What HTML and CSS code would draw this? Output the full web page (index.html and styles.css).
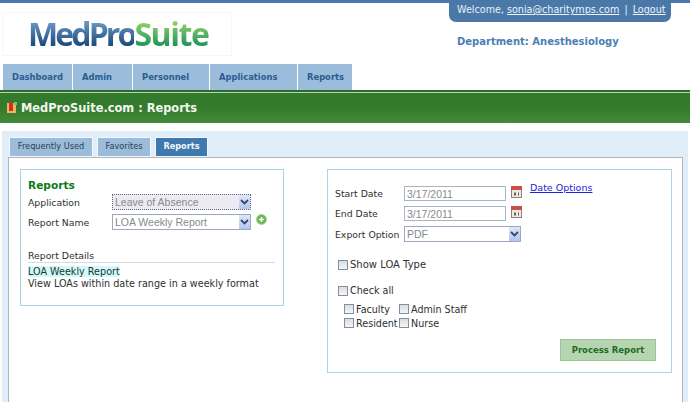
FILE: index.html
```html
<!DOCTYPE html>
<html lang="en">
<head>
<meta charset="utf-8">
<title>MedProSuite.com : Reports</title>
<link rel="stylesheet" href="styles.css">
</head>
<body>
<header class="header">
  <div class="brand-col">
    <div class="logo"><span class="logo-blue">MedPro</span><span class="logo-green">Suite</span></div>
    <nav class="nav">
      <a class="nav-item w-dash">Dashboard</a>
      <a class="nav-item w-admin">Admin</a>
      <a class="nav-item w-pers">Personnel</a>
      <a class="nav-item w-apps">Applications</a>
      <a class="nav-item w-rep">Reports</a>
    </nav>
  </div>
  <div class="user-col">
    <div class="welcome">Welcome, <a class="welcome-link">sonia@charitymps.com</a> <span class="sep">|</span> <a class="welcome-link">Logout</a></div>
    <div class="dept">Department: Anesthesiology</div>
  </div>
</header>
<div class="titlebar">
  <svg class="title-icon" width="10" height="12" viewBox="0 0 10 12"><rect x="0" y="1" width="9" height="10" fill="#e8b860"/><rect x="2" y="0" width="4" height="9" fill="#cc3322"/><rect x="7" y="0" width="3" height="3" fill="#5fd060"/></svg>
  <h1 class="title">MedProSuite.com : Reports</h1>
</div>
<main class="panel">
  <div class="tabs">
    <a class="tab tab-freq">Frequently Used</a>
    <a class="tab tab-fav">Favorites</a>
    <a class="tab tab-active">Reports</a>
  </div>
  <div class="content">
    <section class="box box-left">
      <h2 class="box-title">Reports</h2>
      <div class="row-left">
        <span class="lbl">Application</span>
        <div class="select sel-left sel-dotted"><span class="sel-text">Leave of Absence</span><span class="sel-arrow"><svg width="9" height="6" viewBox="0 0 9 6"><path d="M1 1l3.5 3.5L8 1" fill="none" stroke="#34486e" stroke-width="1.8"/></svg></span></div>
      </div>
      <div class="row-left">
        <span class="lbl">Report Name</span>
        <div class="select sel-left"><span class="sel-text">LOA Weekly Report</span><span class="sel-arrow"><svg width="9" height="6" viewBox="0 0 9 6"><path d="M1 1l3.5 3.5L8 1" fill="none" stroke="#34486e" stroke-width="1.8"/></svg></span></div>
        <svg class="plus" width="11" height="11" viewBox="0 0 11 11"><circle cx="5.5" cy="5.5" r="5" fill="#6cb556" stroke="#a9d79b"/><path d="M5.5 3v5M3 5.5h5" stroke="#fff" stroke-width="1.5"/></svg>
      </div>
      <div class="details-head">Report Details</div>
      <div class="details-body"><mark class="hl">LOA Weekly Report</mark><br>View LOAs within date range in a weekly format</div>
    </section>
    <section class="box box-right">
      <div class="dates">
        <span class="lbl">Start Date</span>
        <div class="input">3/17/2011</div>
        <svg class="cal" width="11" height="12" viewBox="0 0 11 12"><rect x=".5" y="1" width="10" height="10.5" fill="#efe9df" stroke="#8b8378"/><rect x="0" y="0" width="11" height="4" fill="#c8504a"/><path d="M3 6.5h2v3H3zM7 6.5h1v3H7z" fill="#666"/></svg>
        <a class="date-link">Date Options</a>
        <span class="lbl">End Date</span>
        <div class="input">3/17/2011</div>
        <svg class="cal" width="11" height="12" viewBox="0 0 11 12"><rect x=".5" y="1" width="10" height="10.5" fill="#efe9df" stroke="#8b8378"/><rect x="0" y="0" width="11" height="4" fill="#c8504a"/><path d="M3 6.5h2v3H3zM7 6.5h1v3H7z" fill="#666"/></svg>
        <span></span>
        <span class="lbl">Export Option</span>
        <div class="select sel-export"><span class="sel-text">PDF</span><span class="sel-arrow"><svg width="9" height="6" viewBox="0 0 9 6"><path d="M1 1l3.5 3.5L8 1" fill="none" stroke="#34486e" stroke-width="1.8"/></svg></span></div>
      </div>
      <label class="check check-loa"><span class="cb"></span>Show LOA Type</label>
      <label class="check check-all"><span class="cb"></span>Check all</label>
      <div class="check-grid">
        <label class="check"><span class="cb"></span>Faculty</label>
        <label class="check"><span class="cb"></span>Admin Staff</label>
        <label class="check"><span class="cb"></span>Resident</label>
        <label class="check"><span class="cb"></span>Nurse</label>
      </div>
      <div class="actions"><button class="process" type="button">Process Report</button></div>
    </section>
  </div>
</main>
</body>
</html>
```
FILE: styles.css
```css
* { box-sizing: border-box; }
html, body { margin: 0; padding: 0; height: 100%; overflow: hidden; }
body {
  width: 690px;
  height: 402px;
  background: #fff;
  font-family: "DejaVu Sans", Verdana, sans-serif;
  font-size: 10px;
  color: #2f2f2f;
}
.header {
  height: 90px;
  border-top: 3px solid #4a79a9;
  display: flex;
  justify-content: space-between;
}
.brand-col { padding: 9px 0 0 3px; }
.logo {
  width: 230px;
  height: 44px;
  margin-left: -1px;
  border: 1px solid #f7f7f7;
  padding-left: 25px;
  font-family: "Open Sans", sans-serif;
  font-size: 32px;
  line-height: 41px;
  font-weight: 700;
  white-space: nowrap;
}
.logo-blue {
  background: linear-gradient(#6f9bc6 20%, #1f4f80 75%);
  -webkit-background-clip: text;
  background-clip: text;
  color: transparent;
  letter-spacing: -2.9px;
}
.logo-green {
  background: linear-gradient(#8ed06a 25%, #26995a 75%);
  -webkit-background-clip: text;
  background-clip: text;
  color: transparent;
  letter-spacing: -1.4px;
}
.nav { display: flex; margin-top: 8px; height: 26px; gap: 1px; }
.nav-item {
  height: 26px;
  background: #9bbcdb;
  color: #2c5c8f;
  font-weight: 700;
  font-size: 8.4px;
  line-height: 27px;
  padding-left: 9px;
}
.w-dash { width: 69px; }
.w-admin { width: 59px; }
.w-pers { width: 76px; }
.w-apps { width: 87px; }
.w-rep { width: 54px; }
.user-col { width: 241px; }
.welcome {
  width: 222px;
  height: 19px;
  background: #4a79a9;
  border-radius: 0 0 7px 7px;
  color: #e8eff6;
  font-size: 9.6px;
  line-height: 14px;
  padding-left: 8px;
  white-space: nowrap;
}
.welcome-link { text-decoration: underline; color: #eef3f9; }
.sep { margin: 0 2px; }
.dept {
  margin: 13px 0 0 8px;
  font-size: 10px;
  line-height: 14px;
  font-weight: 700;
  color: #4a7fb5;
}
.titlebar {
  height: 33px;
  border-top: 2px solid #2f6b2a;
  background: linear-gradient(#347a2c 0, #347a2c 50%, #438a3a 100%);
  box-shadow: inset 0 1px 0 #b9d3b3;
  display: flex;
  align-items: center;
  padding-left: 7px;
  gap: 4px;
}
.title {
  margin: 0;
  font-size: 11.4px;
  font-weight: 700;
  line-height: 16px;
  color: #f2f6f0;
}
.panel {
  margin: 8px 2px 0;
  height: 271px;
  background: #e1edf9;
  padding: 6px 5px 0 6px;
}
.tabs { display: flex; height: 20px; padding-left: 1px; gap: 3px; }
.tab {
  height: 20px;
  border: 1px solid #f3f8fc;
  background: #9bbcdb;
  color: #2c3c50;
  font-size: 8.2px;
  line-height: 17px;
  text-align: center;
}
.tab-freq { width: 84px; }
.tab-fav { width: 54px; margin-left: 1px; }
.tab-active { width: 53px; margin-left: 1px; background: #4079ae; color: #f0f5fa; font-weight: 700; }
.content {
  height: 260px;
  background: #fff;
  border: 1px solid #b0b5ba;
  border-bottom: 0;
  display: flex;
  align-items: flex-start;
  padding: 11px 10px 0 11px;
  justify-content: space-between;
}
.box { border: 1px solid #a9d4e6; background: #fff; }
.box-left { width: 264px; height: 137px; padding: 8px 8px 0 7px; }
.box-right { width: 345px; height: 204px; padding: 16px 15px 0 7px; }
.box-title {
  margin: 0;
  font-size: 10.6px;
  font-weight: 700;
  line-height: 14px;
  color: #0d7a16;
}
.lbl { font-size: 9.3px; color: #2f2f2f; white-space: nowrap; }
.row-left { display: flex; align-items: center; height: 20px; }
.row-left .lbl { width: 84px; }
.select {
  display: flex;
  justify-content: space-between;
  border: 1px solid #9ba8c0;
  background: #fff;
  height: 16px;
  color: #8a8a8a;
  font-family: "Liberation Sans", Arial, sans-serif;
  font-size: 10.5px;
  line-height: 14px;
}
.sel-left { width: 139px; }
.sel-dotted { border: 1px dotted #5c6a88; background: #ecebf3; }
.sel-export { width: 117px; height: 16px; }
.sel-text { padding-left: 2px; }
.sel-arrow {
  width: 11px;
  background: linear-gradient(#dfe6f8, #b5c5ee);
  display: flex;
  align-items: center;
  justify-content: center;
}
.plus { margin: -5px 0 0 5px; }
.details-head {
  margin-top: 18px;
  height: 13px;
  line-height: 12px;
  font-size: 9.3px;
  border-bottom: 1px solid #d6dce2;
}
.details-body { margin-top: 3px; font-size: 9.65px; line-height: 12px; white-space: nowrap; color: #2f2f2f; }
.hl { background: #cdfbfb; color: #2f2f2f; }
.dates {
  display: grid;
  grid-template-columns: 69px 102px 24px 1fr;
  grid-template-rows: 15px 15px 17px;
  row-gap: 5px;
  align-items: center;
}
.dates .select { grid-column: 2 / span 3; margin-top: -1px; }
.input {
  height: 15px;
  border: 1px solid #a8b3c4;
  color: #8a8a8a;
  font-family: "Liberation Sans", Arial, sans-serif;
  font-size: 10.5px;
  line-height: 14px;
  padding-left: 2px;
}
.cal { margin: -4px 0 0 5px; }
.date-link {
  color: #2222dd;
  text-decoration: underline;
  font-size: 9.5px;
  align-self: start;
  line-height: 10px;
  margin-top: -3px;
}
.check { display: flex; align-items: center; gap: 2px; font-size: 9.6px; line-height: 13px; white-space: nowrap; }
.cb {
  width: 10px;
  height: 10px;
  border: 1px solid #7b91a8;
  background: linear-gradient(#dcdcdc, #f6f6f6);
  flex: none;
}
.check-loa { margin: 15px 0 0 3px; font-size: 10px; }
.check-all { margin: 13px 0 0 3px; }
.check-grid {
  display: grid;
  grid-template-columns: 55px 1fr;
  row-gap: 0;
  margin: 5px 0 0 9px;
}
.check-grid .check { height: 14px; }
.actions { display: flex; justify-content: flex-end; margin-top: 9px; }
.process {
  width: 96px;
  height: 22px;
  background: #b5d5b0;
  border: 1px solid #9bc496;
  color: #1f6a25;
  font-family: inherit;
  font-weight: 700;
  font-size: 8.5px;
  padding: 0;
}
```
